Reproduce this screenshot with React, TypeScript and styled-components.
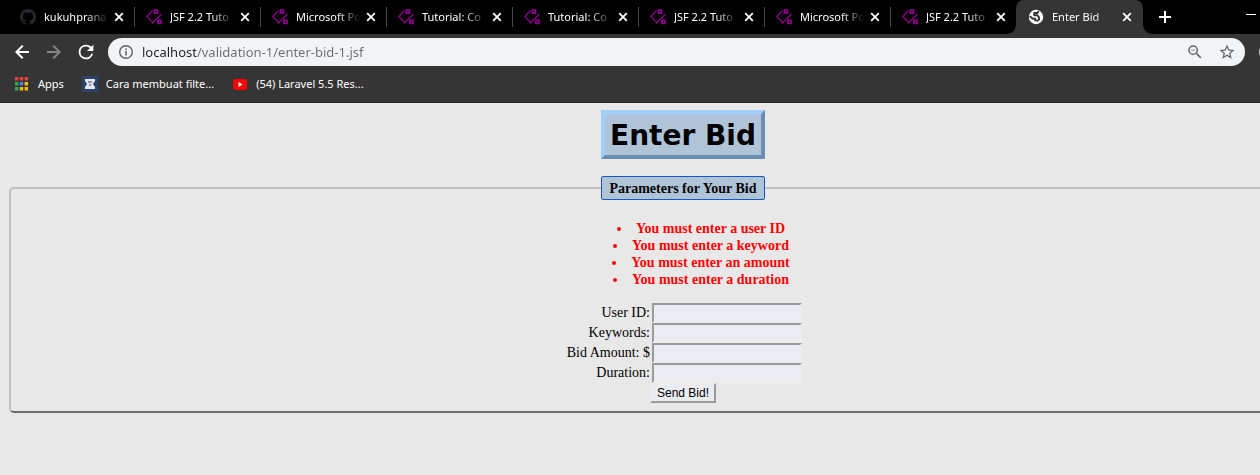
import React from "react";
import styled, { createGlobalStyle } from "styled-components";

const GlobalStyle = createGlobalStyle`
  *, *::before, *::after { box-sizing: border-box; }
  html, body { margin: 0; background: #e8e8e8; }
  button, input { font: inherit; margin: 0; }
  svg { display: block; flex: none; }
`;

const UI_FONT = `"Noto Sans", "Open Sans", sans-serif`;

const Screen = styled.div`
  overflow: hidden;
`;

/* The window reaches past the right edge of the screen. */
const Window = styled.div`
  width: calc(100% + 106px);
  min-height: 100vh;
  background: #e8e8e8;
`;

const TabStrip = styled.div`
  display: flex;
  height: 34px;
  padding-left: 8px;
  background: #000;
  font-family: ${UI_FONT};
  font-size: 11px;
  color: #fff;
`;

const Tab = styled.div<{ $active?: boolean }>`
  position: relative;
  display: flex;
  align-items: center;
  flex: none;
  width: ${(p) => (p.$active ? 127 : 126)}px;
  padding: 0 ${(p) => (p.$active ? 8 : 7)}px 0 12px;
  gap: 2px;
  border-radius: 8px 8px 0 0;
  background: ${(p) => (p.$active ? "#353535" : "transparent")};

  &::before,
  &::after {
    content: "";
    display: ${(p) => (p.$active ? "block" : "none")};
    position: absolute;
    bottom: 0;
    width: 8px;
    height: 8px;
  }
  &::before {
    right: 100%;
    background: radial-gradient(circle at 0 0, transparent 7px, #353535 8px);
  }
  &::after {
    left: 100%;
    background: radial-gradient(circle at 100% 0, transparent 7px, #353535 8px);
  }
`;

const Divider = styled.span`
  position: absolute;
  right: -1px;
  top: 7px;
  width: 1px;
  height: 20px;
  background: #4a4a4a;
`;

const TabTitle = styled.button`
  flex: 1;
  min-width: 0;
  height: 20px;
  margin-left: 6px;
  padding: 0;
  border: 0;
  background: none;
  color: inherit;
  line-height: 20px;
  text-align: left;
  white-space: nowrap;
  overflow: hidden;
  mask-image: linear-gradient(to right, #000 calc(100% - 24px), transparent);
`;

const IconButton = styled.button<{ $size: number }>`
  display: flex;
  align-items: center;
  justify-content: center;
  flex: none;
  width: ${(p) => p.$size}px;
  height: ${(p) => p.$size}px;
  padding: 0;
  border: 0;
  background: none;
  color: inherit;
`;

const NewTab = styled.div`
  display: flex;
  align-items: center;
  padding-left: 8px;
`;

const WindowControls = styled.div`
  display: flex;
  width: 138px;
  height: 28px;
  margin-left: auto;
`;

const ControlButton = styled.button`
  display: flex;
  align-items: center;
  justify-content: center;
  width: 46px;
  height: 28px;
  padding: 0;
  border: 0;
  background: none;
`;

const Toolbar = styled.div`
  display: flex;
  align-items: center;
  height: 36px;
  padding: 0 8px;
  gap: 4px;
  background: #353535;
  color: #fff;
`;

const Omnibox = styled.div`
  display: flex;
  align-items: center;
  flex: 1;
  height: 28px;
  margin: 0 9px 0 4px;
  padding: 0 6px 0 10px;
  border-radius: 14px;
  background: #f1f3f4;
  color: #5f6368;
`;

const Address = styled.input`
  flex: 1;
  min-width: 0;
  height: 20px;
  margin-left: 8px;
  padding: 0;
  border: 0;
  outline: 0;
  font-family: ${UI_FONT};
  font-size: 13px;
  line-height: 20px;
  color: transparent;
  background: linear-gradient(to right, #202124 54px, #6b6e72 54px);
  background-clip: text;
`;

const OmniboxActions = styled.div`
  display: flex;
  gap: 8px;
`;

const Profile = styled.div`
  display: flex;
  width: 100px;
`;

const BookmarksBar = styled.nav`
  display: flex;
  align-items: center;
  height: 33px;
  padding: 0 14px 4px;
  gap: 18px;
  border-bottom: 1px solid #222;
  background: #353535;
  font-family: ${UI_FONT};
  font-size: 11px;
`;

const Bookmark = styled.a`
  display: flex;
  align-items: center;
  gap: 8px;
  line-height: 16px;
  color: #fff;
  text-decoration: none;
  white-space: nowrap;
`;

const Page = styled.main`
  padding: 7px 8px 0;
  font-family: "Liberation Serif", "Times New Roman", serif;
  font-size: 14px;
  line-height: 17px;
  text-align: center;
  color: #000;
`;

const Title = styled.h1`
  width: fit-content;
  margin: 0 auto 17px;
  padding: 4px 5px 1px;
  border: 4px solid;
  border-color: #9fd0ff #6b8daf #6b8daf #9fd0ff;
  background: #b0c4d8;
  font-family: "DejaVu Sans", Verdana, sans-serif;
  font-size: 28px;
  font-weight: bold;
  line-height: 36px;
`;

const Fieldset = styled.fieldset`
  margin: 0 1px;
  padding: 20px 12px 8px;
  border: 2px solid;
  border-color: #c0c0c0 #6c6c6c #6c6c6c #c0c0c0;
  border-radius: 5px;
`;

const Legend = styled.legend`
  margin: 0 auto;
  padding: 4px 7px 2px;
  border: 1px solid #1857bd;
  border-radius: 2px;
  background: #b0c4d8;
  font-weight: bold;
  line-height: 16px;
`;

const Errors = styled.ul`
  margin: 0 0 15px;
  padding: 0 0 0 36px;
  list-style-position: inside;
  font-weight: bold;
  color: #f00;
`;

const Form = styled.form`
  display: flex;
  flex-direction: column;
  align-items: center;
`;

const Fields = styled.div`
  display: grid;
  grid-template-columns: minmax(86px, auto) 150px;
  grid-auto-rows: 20px;
  column-gap: 2px;
`;

const Label = styled.label`
  line-height: 19px;
  text-align: right;
`;

const Field = styled.input`
  width: 150px;
  height: 20px;
  padding: 1px 2px;
  border: 2px solid;
  border-color: #9a9a9a #ececec #ececec #9a9a9a;
  background: #ebecf2;
  font-size: 13px;
`;

const Submit = styled.button`
  height: 20px;
  padding: 0 5px;
  border: 2px solid;
  border-color: #ececec #9a9a9a #9a9a9a #ececec;
  background: #ebecf2;
  font-family: "Liberation Sans", Arial, sans-serif;
  font-size: 12px;
  line-height: 16px;
  color: #000;
`;

const GithubIcon = () => (
  <svg width="16" height="16" viewBox="0 0 16 16" fill="#24292e">
    <path d="M8 0C3.58 0 0 3.58 0 8c0 3.54 2.29 6.53 5.47 7.59.4.07.55-.17.55-.38 0-.19-.01-.82-.01-1.49-2.01.37-2.53-.49-2.69-.94-.09-.23-.48-.94-.82-1.13-.28-.15-.68-.52-.01-.53.63-.01 1.08.58 1.23.82.72 1.21 1.87.87 2.33.66.07-.52.28-.87.51-1.07-1.78-.2-3.64-.89-3.64-3.95 0-.87.31-1.59.82-2.15-.08-.2-.36-1.02.08-2.12 0 0 .67-.21 2.2.82.64-.18 1.32-.27 2-.27s1.36.09 2 .27c1.53-1.04 2.2-.82 2.2-.82.44 1.1.16 1.92.08 2.12.51.56.82 1.27.82 2.15 0 3.07-1.87 3.75-3.65 3.95.29.25.54.73.54 1.48 0 1.07-.01 1.93-.01 2.2 0 .21.15.46.55.38A8.01 8.01 0 0 0 16 8c0-4.42-3.58-8-8-8z" />
  </svg>
);

const TutorialIcon = () => (
  <svg width="16" height="16" viewBox="0 0 16 16" fill="none" stroke="#8b008b">
    <path strokeWidth="1.3" d="M6.5 1.5 0.9 7.5 7 14M15.5 5 6 14.5" />
    <path strokeWidth="1.8" d="M8.4 1.2h3v3h-3zM11.9 11.4h3v3h-3z" />
  </svg>
);

const GlobeIcon = () => (
  <svg width="16" height="16" viewBox="0 0 16 16">
    <circle cx="8" cy="8" r="7.2" fill="#fff" />
    <path
      fill="none"
      stroke="#353535"
      strokeWidth="1.9"
      strokeLinejoin="round"
      d="M10.8 2.2 9.2 4H6.2v2.2h3.2l1.6 2.2v2l-2.4 1.8M1.6 7.2l3.4 2.6h2.4v2.4"
    />
  </svg>
);

const CloseIcon = () => (
  <svg width="16" height="16" viewBox="0 0 16 16" stroke="#fff" strokeWidth="1.8">
    <path d="M4.2 4.2l7.6 7.6M11.8 4.2l-7.6 7.6" />
  </svg>
);

const PlusIcon = () => (
  <svg width="16" height="16" viewBox="0 0 16 16" stroke="#fff" strokeWidth="2">
    <path d="M8 2v12M2 8h12" />
  </svg>
);

const BackIcon = () => (
  <svg width="24" height="24" viewBox="0 0 24 24" fill="#fff">
    <path d="M19 11H8.8l4.7-4.7L12 5l-7 7 7 7 1.4-1.4L8.8 13H19z" />
  </svg>
);

const ForwardIcon = () => (
  <svg width="24" height="24" viewBox="0 0 24 24" fill="#868686">
    <path d="M5 11h10.2L10.5 6.3 12 5l7 7-7 7-1.4-1.4L15.2 13H5z" />
  </svg>
);

const ReloadIcon = () => (
  <svg width="22" height="22" viewBox="0 0 24 24" fill="#fff">
    <path d="M17.65 6.35A7.96 7.96 0 0 0 12 4a8 8 0 1 0 7.73 10h-2.08A6 6 0 1 1 12 6c1.66 0 3.14.69 4.22 1.78L13 11h7V4z" />
  </svg>
);

const InfoIcon = () => (
  <svg width="16" height="16" viewBox="0 0 16 16">
    <circle cx="8" cy="8" r="6.3" fill="none" stroke="#5f6368" strokeWidth="1.4" />
    <path d="M7.2 7h1.6v4.5H7.2zM7.2 4.5h1.6V6H7.2z" fill="#5f6368" />
  </svg>
);

const ZoomOutIcon = () => (
  <svg width="18" height="18" viewBox="0 0 24 24" fill="#5f6368">
    <path d="M15.5 14h-.79l-.28-.27A6.47 6.47 0 0 0 16 9.5 6.5 6.5 0 1 0 9.5 16c1.61 0 3.09-.59 4.23-1.57l.27.28v.79l5 4.99L20.49 19zm-6 0a4.5 4.5 0 1 1 0-9 4.5 4.5 0 0 1 0 9zM7 9h5v1H7z" />
  </svg>
);

const StarIcon = () => (
  <svg width="18" height="18" viewBox="0 0 24 24" fill="#5f6368">
    <path d="M22 9.24l-7.19-.62L12 2 9.19 8.63 2 9.24l5.46 4.73L5.82 21 12 17.27 18.18 21l-1.63-7.03zM12 15.4l-3.76 2.27 1-4.28-3.32-2.88 4.38-.38L12 6.1l1.71 4.04 4.38.38-3.32 2.88 1 4.28z" />
  </svg>
);

const AvatarIcon = () => (
  <svg width="20" height="20" viewBox="0 0 20 20">
    <circle cx="10" cy="10" r="9" fill="#d0d0d0" />
  </svg>
);

const AppsIcon = () => (
  <svg width="16" height="16" viewBox="0 0 16 16">
    <path fill="#ea4335" d="M1 1h3.4v3.4H1zM5.8 1h3.4v3.4H5.8zM10.6 1H14v3.4h-3.4z" />
    <path fill="#34a853" d="M1 6h3.4v3.4H1zM1 11h3.4v3.4H1z" />
    <path fill="#4285f4" d="M5.8 6h3.4v3.4H5.8z" />
    <path fill="#fbbc05" d="M10.6 6H14v3.4h-3.4zM5.8 11h3.4v3.4H5.8zM10.6 11H14v3.4h-3.4z" />
  </svg>
);

const HourglassIcon = () => (
  <svg width="16" height="16" viewBox="0 0 16 16">
    <path fill="#2d4169" d="M0 0h16v16H0z" />
    <path fill="#e4e6ea" d="M3 3h10v2.5H3zM3.500 5.500h9L11 8l1.500 2.500h-9L5 8zM3 10.500h10V13H3z" />
    <path fill="#2d4169" d="M6 5.500h4v1H6zM7 8.500h2v1H7z" />
  </svg>
);

const YoutubeIcon = () => (
  <svg width="16" height="16" viewBox="0 0 16 16">
    <rect x="1" y="3" width="14" height="11" rx="2.5" fill="#f00" />
    <path d="M6.5 6v5l4-2.5z" fill="#fff" />
  </svg>
);

const tabs = [
  "kukuhprana",
  "JSF 2.2 Tuto",
  "Microsoft Po",
  "Tutorial: Co",
  "Tutorial: Co",
  "JSF 2.2 Tuto",
  "Microsoft Po",
  "JSF 2.2 Tuto",
  "Enter Bid",
];

const bookmarks = [
  { title: "Apps", icon: <AppsIcon /> },
  { title: "Cara membuat filte...", icon: <HourglassIcon /> },
  { title: "(54) Laravel 5.5 Res...", icon: <YoutubeIcon /> },
];

const errors = [
  "You must enter a user ID",
  "You must enter a keyword",
  "You must enter an amount",
  "You must enter a duration",
];

const fields = [
  { id: "userId", label: "User ID:" },
  { id: "keywords", label: "Keywords:" },
  { id: "amount", label: "Bid Amount: $" },
  { id: "duration", label: "Duration:" },
];

export default function App() {
  const active = tabs.length - 1;
  return (
    <Screen>
      <GlobalStyle />
      <Window>
        <TabStrip>
          {tabs.map((title, i) => (
            <Tab key={i} $active={i === active}>
              {i === 0 ? <GithubIcon /> : i === active ? <GlobeIcon /> : <TutorialIcon />}
              <TabTitle>{title}</TabTitle>
              <IconButton $size={16} aria-label="Close tab">
                <CloseIcon />
              </IconButton>
              {i < active - 1 && <Divider />}
            </Tab>
          ))}
          <NewTab>
            <IconButton $size={28} aria-label="New tab">
              <PlusIcon />
            </IconButton>
          </NewTab>
          <WindowControls>
            <ControlButton aria-label="Minimize">
              <svg width="10" height="10" viewBox="0 0 10 10" fill="#fff">
                <path d="M0 5h10v1H0z" />
              </svg>
            </ControlButton>
          </WindowControls>
        </TabStrip>
        <Toolbar>
          <IconButton $size={28} aria-label="Back">
            <BackIcon />
          </IconButton>
          <IconButton $size={28} aria-label="Forward">
            <ForwardIcon />
          </IconButton>
          <IconButton $size={28} aria-label="Reload">
            <ReloadIcon />
          </IconButton>
          <Omnibox>
            <InfoIcon />
            <Address aria-label="Address" defaultValue="localhost/validation-1/enter-bid-1.jsf" />
            <OmniboxActions>
              <IconButton $size={24} aria-label="Zoom">
                <ZoomOutIcon />
              </IconButton>
              <IconButton $size={24} aria-label="Bookmark this page">
                <StarIcon />
              </IconButton>
            </OmniboxActions>
          </Omnibox>
          <Profile>
            <IconButton $size={20} aria-label="Profile">
              <AvatarIcon />
            </IconButton>
          </Profile>
        </Toolbar>
        <BookmarksBar>
          {bookmarks.map((b) => (
            <Bookmark key={b.title} href="#">
              {b.icon}
              {b.title}
            </Bookmark>
          ))}
        </BookmarksBar>
        <Page>
          <Title>Enter Bid</Title>
          <Fieldset>
            <Legend>Parameters for Your Bid</Legend>
            <Errors>
              {errors.map((e) => (
                <li key={e}>{e}</li>
              ))}
            </Errors>
            <Form onSubmit={(e) => e.preventDefault()}>
              <Fields>
                {fields.map((f) => (
                  <React.Fragment key={f.id}>
                    <Label htmlFor={f.id}>{f.label}</Label>
                    <Field id={f.id} name={f.id} />
                  </React.Fragment>
                ))}
              </Fields>
              <Submit type="submit">Send Bid!</Submit>
            </Form>
          </Fieldset>
        </Page>
      </Window>
    </Screen>
  );
}
